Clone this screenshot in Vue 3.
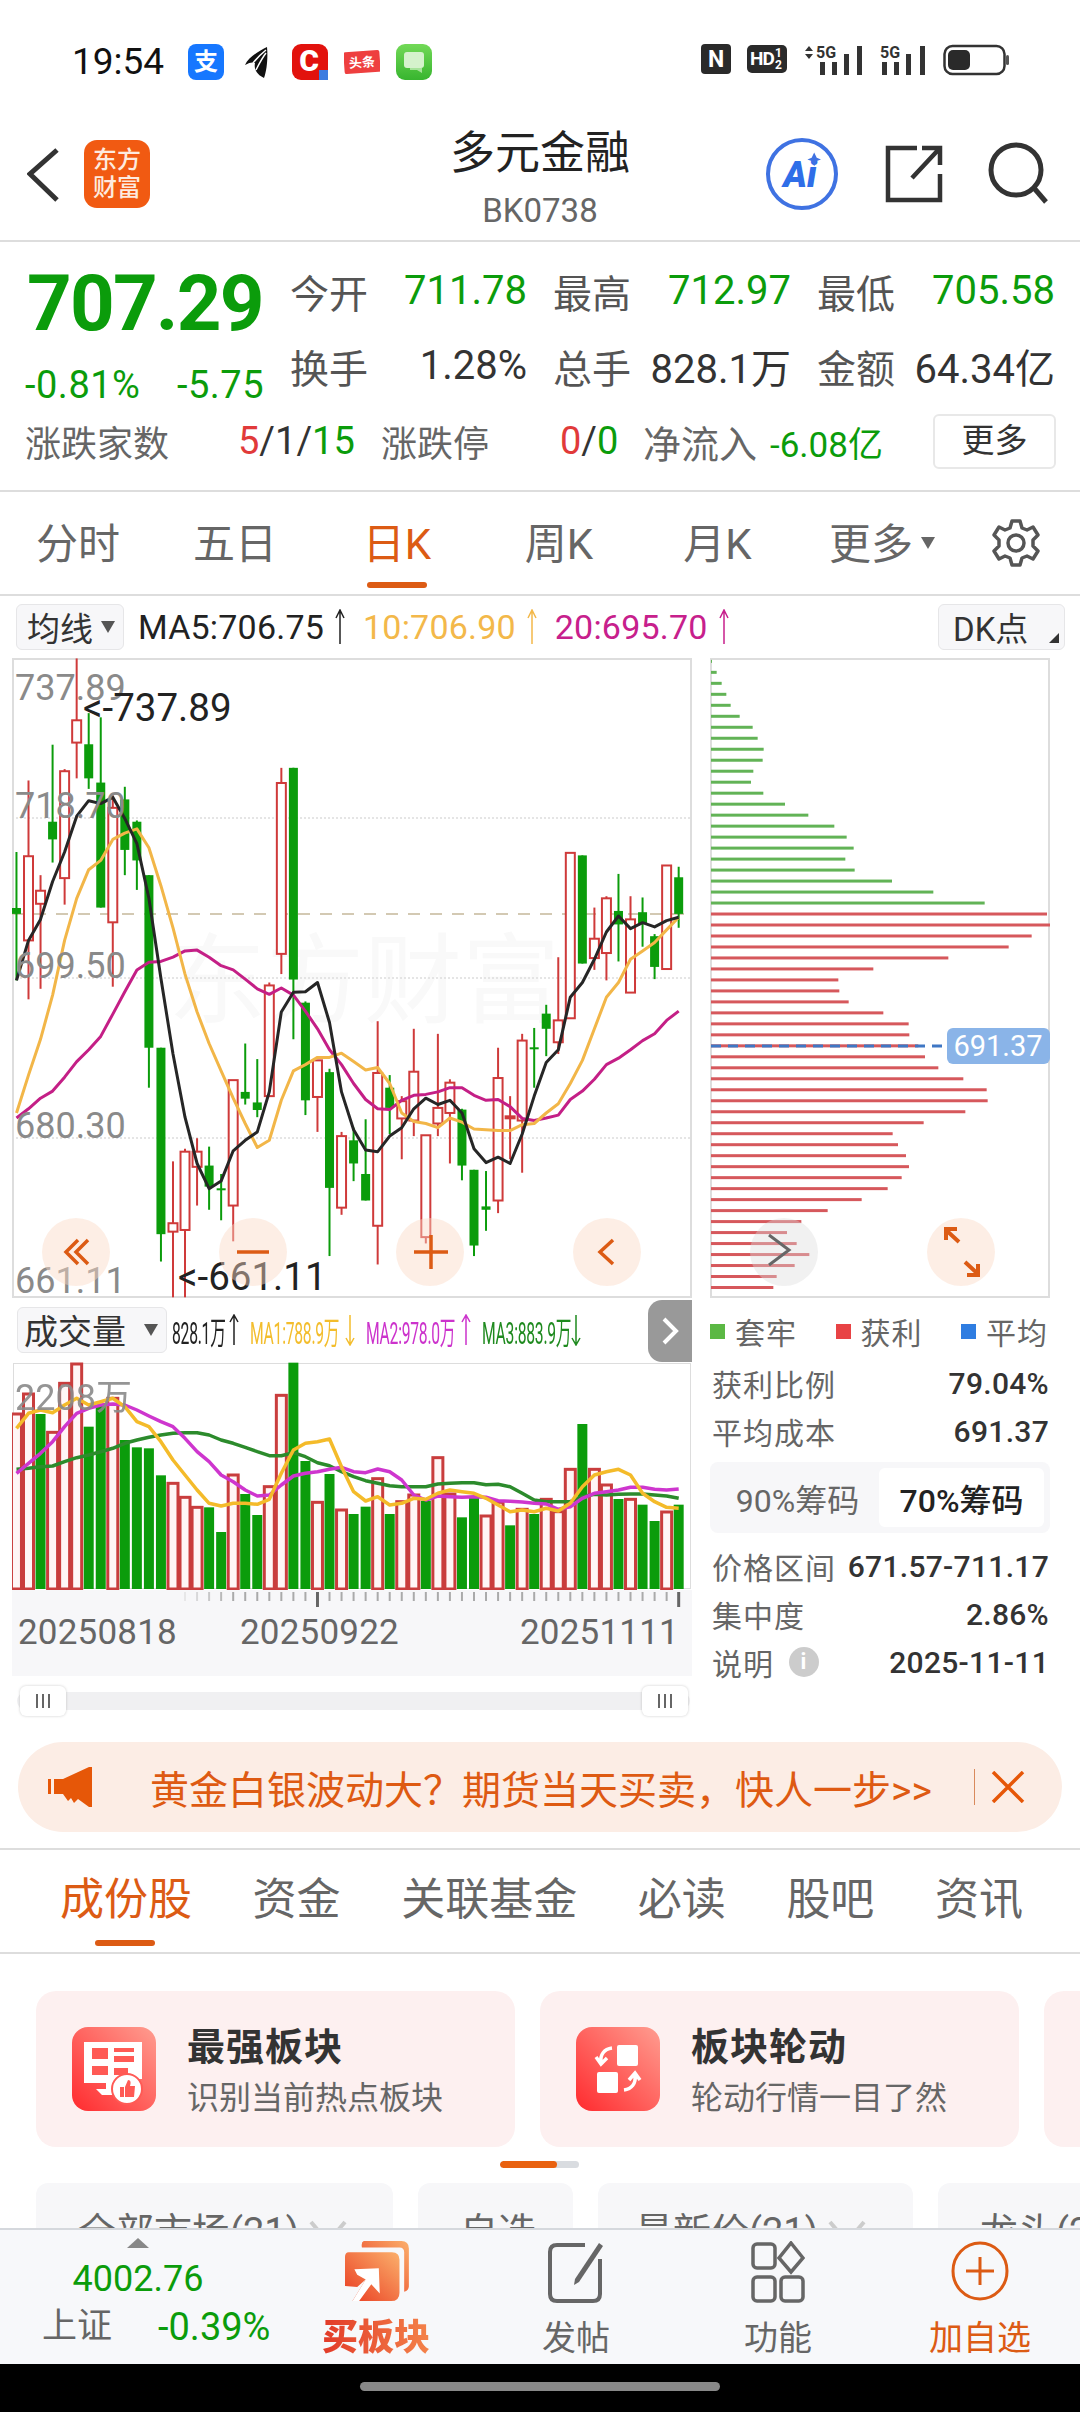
<template>
  <div class="page">
    <!-- status bar -->
    <div class="status">
      <div class="status-left">
        <span class="time">19:54</span>
        <svg class="st-ico" viewBox="0 0 36 36"><rect width="36" height="36" rx="8" fill="#1677ff"/><text x="18" y="26" text-anchor="middle" class="st-zhi">支</text></svg>
        <svg class="st-ico" viewBox="0 0 36 36"><path d="M27 3C17 8 8 14 5 21c5-3 8-3 10-2-1 4 0 11 9 15 3-8 4-21 3-31z" fill="#111"/><path d="M13 19C17 14 21 10 26 6M16 26C19 20 22 14 26 9" stroke="#fff" stroke-width="1.5" fill="none"/></svg>
        <svg class="st-ico" viewBox="0 0 36 36"><rect width="36" height="36" rx="9" fill="#e2120d"/><text x="17" y="27" text-anchor="middle" class="st-c">C</text><rect x="27" y="26" width="9" height="10" fill="#3d7ce0"/></svg>
        <svg class="st-ico" viewBox="0 0 36 36"><g transform="rotate(-4 18 18)"><rect y="7" width="36" height="22" rx="2" fill="#ee3f3f"/><text x="18" y="23" text-anchor="middle" class="st-tt">头条</text></g></svg>
        <svg class="st-ico" viewBox="0 0 36 36"><defs><linearGradient id="wx" x1="0" y1="0" x2="0" y2="1"><stop offset="0" stop-color="#72d957"/><stop offset="1" stop-color="#38b52f"/></linearGradient></defs><rect width="36" height="36" rx="9" fill="url(#wx)"/><rect x="8" y="8" width="20" height="16" rx="3" fill="#d5f2cc"/><path d="M14 24h12v5l-5-3h-7z" fill="#a6e39a"/></svg>
      </div>
      <div class="status-right">
        <svg width="30" height="30" viewBox="0 0 30 30"><rect width="30" height="30" rx="4" fill="#2a2a2a"/><text x="15" y="23" text-anchor="middle" class="st-n">N</text></svg>
        <svg width="40" height="30" viewBox="0 0 40 30"><rect width="40" height="28" y="1" rx="5" fill="#2a2a2a"/><text x="3" y="21" class="st-hd">HD</text><text x="28" y="13" class="st-sm">1</text><text x="28" y="25" class="st-sm">2</text></svg>
        <svg width="60" height="32" viewBox="0 0 60 32">
          <path d="M2 7l4-5 4 5zM2 10l4 5 4-5z" fill="#333"/>
          <text x="13" y="14" class="st-5g">5G</text>
          <path d="M17 18h5v13h-5zM29 18h5v13h-5zM41 10h5v21h-5zM54 2h5v29h-5z" fill="#333"/>
        </svg>
        <svg width="48" height="32" viewBox="0 0 48 32">
          <text x="1" y="14" class="st-5g">5G</text>
          <path d="M3 18h5v13H3zM15 18h5v13h-5zM27 10h5v21h-5zM41 2h5v29h-5z" fill="#333"/>
        </svg>
        <svg width="67" height="32" viewBox="0 0 67 32"><rect x="1.5" y="2" width="60" height="28" rx="8" fill="none" stroke="#333" stroke-width="2.5"/><rect x="5" y="6" width="22" height="20" rx="5" fill="#2a2a2a"/><rect x="63" y="11" width="3" height="10" rx="1.5" fill="#555"/></svg>
      </div>
    </div>

    <!-- nav -->
    <div class="nav">
      <div class="nav-left">
        <svg class="back" width="32" height="56" viewBox="0 0 32 56"><path d="M30 3L3 27l27 26" fill="none" stroke="#333" stroke-width="5"/></svg>
        <div class="logo">东方<br>财富</div>
      </div>
      <div class="nav-title">
        <div class="title">多元金融</div>
        <div class="code">BK0738</div>
      </div>
      <div class="nav-right">
        <svg width="74" height="74" viewBox="0 0 74 74"><circle cx="37" cy="37" r="34" fill="none" stroke="#3f72e2" stroke-width="4"/><text x="35" y="50" text-anchor="middle" class="ai">Ai</text><path d="M52 16l3 6 5 2-5 2-3 6-3-6-5-2 5-2z" fill="#3f72e2" transform="translate(5 2) scale(.85)"/></svg>
        <svg width="60" height="60" viewBox="0 0 60 60"><path d="M33 4H4v52h52V30M28 34L56 4M38 4h18v17" fill="none" stroke="#333" stroke-width="4.5"/></svg>
        <svg width="62" height="62" viewBox="0 0 62 62"><circle cx="28" cy="28" r="25" fill="none" stroke="#333" stroke-width="5"/><path d="M46 46l12 14" stroke="#333" stroke-width="5"/></svg>
      </div>
    </div>

    <!-- quote -->
    <div class="quote">
      <div class="quote-top">
        <div class="price-col">
          <div class="price">707.29</div>
          <div class="price-sub"><span>-0.81%</span><span>-5.75</span></div>
        </div>
        <div class="stats">
          <div v-for="s in stats" :key="s.k" class="stat">
            <span class="stat-k">{{ s.k }}</span>
            <span class="stat-v" :class="{ green: s.g }">{{ s.v }}</span>
          </div>
        </div>
      </div>
      <div class="breadth">
        <span class="b-k b1">涨跌家数</span>
        <span class="b-v b2"><i class="red">5</i>/1/<i class="green">15</i></span>
        <span class="b-k b3">涨跌停</span>
        <span class="b-v b4"><i class="red">0</i>/<i class="green">0</i></span>
        <span class="b-k b5">净流入</span>
        <span class="b-v b6 green">-6.08亿</span>
        <span class="more-btn">更多</span>
      </div>
    </div>

    <!-- period tabs -->
    <div class="periods">
      <span v-for="p in periods" :key="p" class="period" :class="{ on: p === '日K' }"><em>{{ p }}</em></span>
      <span class="period"><em>更多</em><i class="tri"></i></span>
      <svg class="gear" width="50" height="50" viewBox="0 0 50 48"><path d="M21 2h8l2 7 5 2 6-3 5 8-5 5v6l5 5-5 8-6-3-5 2-2 7h-8l-2-7-5-2-6 3-5-8 5-5v-6l-5-5 5-8 6 3 5-2z" fill="none" stroke="#555" stroke-width="3.5" stroke-linejoin="round"/><circle cx="25" cy="24" r="8" fill="none" stroke="#555" stroke-width="3.5"/></svg>
    </div>

    <!-- MA legend -->
    <div class="ma-row">
      <span class="select">均线<i class="tri dark"></i></span>
      <span v-for="m in maLegend" :key="m.t" class="ma-item" :style="{ color: m.c }">{{ m.t }}<svg class="arrow" width="12" height="36" viewBox="0 0 12 36"><path d="M6 35V1M2 9l4-8 4 8" fill="none" stroke="currentColor" stroke-width="1.5"/></svg></span>
      <span class="select dk">DK点<i class="corner"></i></span>
    </div>

    <!-- main + chip chart -->
    <div class="chart-row">
      <div class="chart main-chart">
        <div class="watermark">东方财富</div>
        <svg class="chart-svg" width="680" height="640" viewBox="0 0 680 640">
          <line v-for="y in gridY" :key="y" x1="0" x2="680" :y1="y" :y2="y" class="grid"/>
          <line x1="0" x2="680" y1="256" y2="256" class="last"/>
          <g v-for="(c, i) in candles" :key="i" :class="c.up ? 'up' : 'dn'">
            <line :x1="c.x" :x2="c.x" :y1="c.wt" :y2="c.wb" class="wick"/>
            <rect :x="c.x - 4.5" :width="9" :y="c.bt" :height="c.h" class="body"/>
          </g>
          <polyline :points="ma20" class="ln m20"/>
          <polyline :points="ma10" class="ln m10"/>
          <polyline :points="ma5" class="ln m5"/>
          <text v-for="l in axisLabels" :key="l.t" x="3" :y="l.y" class="ax">{{ l.t }}</text>
          <text x="71" y="63" class="mark">&lt;-737.89</text>
          <text x="166" y="632" class="mark">&lt;-661.11</text>
          <g v-for="b in zoomBtns" :key="b.x"><circle :cx="b.x" cy="594" r="34" class="zbtn"/></g>
          <path d="M66 582l-12 12 12 12M76 582l-12 12 12 12" class="zic"/>
          <path d="M225 594h32" class="zic"/>
          <path d="M402 594h34M419 577v34" class="zic"/>
          <path d="M601 582l-13 12 13 12" class="zic"/>
        </svg>
      </div>
      <div class="chart chip-chart">
        <svg class="chart-svg" width="340" height="640" viewBox="0 0 340 640">
          <rect v-for="(b, i) in chips" :key="i" x="1" :y="b.y" :width="b.w" height="3" :fill="b.c"/>
          <line x1="1" x2="236" y1="388" y2="388" class="avg"/>
          <rect x="237" y="370" width="103" height="36" rx="6" fill="#8ab4e8"/>
          <text x="288" y="398" text-anchor="middle" class="avg-t">691.37</text>
          <circle cx="74" cy="594" r="34" fill="#dcdcdc" opacity=".4"/>
          <path d="M59 577l20 15-20 15" fill="none" stroke="#666" stroke-width="3"/>
          <circle cx="251" cy="594" r="34" class="zbtn"/>
          <path d="M236 582v-11h11M236 572l13 12M268 606v11h-11M268 616l-13-12" fill="none" stroke="#dc5b14" stroke-width="4"/>
        </svg>
      </div>
    </div>

    <div class="lower-row">
      <div class="lower-left">
        <div class="vol-head">
          <span class="select vol-sel">成交量<i class="tri dark"></i></span>
          <div v-for="v in volLegend" :key="v.t" class="vl" :style="{ color: v.c, width: v.w + 'px' }">
            <span class="vl-t">{{ v.t }}</span>
            <svg class="vl-a" :class="{ down: v.down }" width="12" height="32" viewBox="0 0 12 32"><path d="M6 31V1M2 8l4-7 4 7" fill="none" stroke="currentColor" stroke-width="1.5"/></svg>
          </div>
          <div class="side-tab"><svg width="18" height="30" viewBox="0 0 18 30"><path d="M3 3l12 12L3 27" fill="none" stroke="#fff" stroke-width="4"/></svg></div>
        </div>
        <div class="chart vol-chart">
          <svg class="chart-svg" width="680" height="228" viewBox="0 0 680 228">
            <rect v-for="(b, i) in volBars" :key="i" :x="b.x" :y="b.y" width="10" :height="b.h" :class="b.up ? 'vup' : 'vdn'"/>
            <polyline :points="vMa3" class="vln v3"/>
            <polyline :points="vMa2" class="vln v2"/>
            <polyline :points="vMa1" class="vln v1"/>
            <text x="3" y="48" class="ax vol-ax">2208万</text>
          </svg>
        </div>
        <div class="axis">
          <svg class="ticks" width="680" height="20" viewBox="0 0 680 20">
            <line v-for="t in ticks" :key="t.x" :x1="t.x" :x2="t.x" y1="2" :y2="t.major ? 17 : 11" :stroke="t.major ? '#666' : '#aaa'" :stroke-width="t.major ? 3 : 2" :opacity="t.o"/>
          </svg>
          <div class="dates"><span>20250818</span><span>20250922</span><span>20251111</span></div>
        </div>
        <div class="slider">
          <div class="track"></div>
          <span class="handle"><i></i><i></i><i></i></span>
          <span class="handle"><i></i><i></i><i></i></span>
        </div>
      </div>
      <div class="info">
        <div class="legend">
          <span><i style="background:#5bb844"></i>套牢</span>
          <span><i style="background:#e84345"></i>获利</span>
          <span><i style="background:#2f7de1"></i>平均</span>
        </div>
        <div class="info-row"><span>获利比例</span><b>79.04%</b></div>
        <div class="info-row"><span>平均成本</span><b>691.37</b></div>
        <div class="toggle"><span>90%筹码</span><span class="on">70%筹码</span></div>
        <div class="info-row"><span>价格区间</span><b>671.57-711.17</b></div>
        <div class="info-row"><span>集中度</span><b>2.86%</b></div>
        <div class="info-row"><span class="note">说明<i class="info-i">i</i></span><b>2025-11-11</b></div>
      </div>
    </div>

    <!-- banner -->
    <div class="banner">
      <svg class="horn" width="46" height="40" viewBox="0 0 46 40"><path d="M44 0v40h-3L30 32l-4 4-3-5-3 3-5-7H6V12h9L41 0z" fill="#e65708"/><rect y="12" width="3" height="15" fill="#e65708"/></svg>
      <span class="banner-t">黄金白银波动大？期货当天买卖，快人一步&gt;&gt;</span>
      <i class="banner-sep"></i>
      <svg width="34" height="32" viewBox="0 0 34 32"><path d="M2 1l30 30M32 1L2 31" stroke="#e65708" stroke-width="3.5"/></svg>
    </div>

    <!-- content tabs -->
    <div class="ctabs">
      <span v-for="t in contentTabs" :key="t" class="ctab" :class="{ on: t === '成份股' }">{{ t }}</span>
    </div>

    <div class="scroll">
      <div class="cards">
        <div class="card">
          <svg class="card-ico" width="84" height="84" viewBox="0 0 84 84">
            <defs><linearGradient id="cg" x1="1" y1="0" x2="0" y2="1"><stop offset="0" stop-color="#ff9d90"/><stop offset="1" stop-color="#ff2a2e"/></linearGradient></defs>
            <rect width="84" height="84" rx="16" fill="url(#cg)"/>
            <path d="M12 15h58v37H58v16H30l-6-6h10v-6H12z" fill="#fff"/>
            <path d="M20 21h16v11H20zM42 21h20v4H42zM42 29h20v6H42zM20 39h16v9H20zM42 41h14v7H42z" fill="#ff5a55"/>
            <circle cx="55" cy="62" r="15" fill="#fff" stroke="#ff5a55" stroke-width="2"/>
            <path d="M48 60h4v10h-4zM53 60l3-7c3 0 3 3 2 6h5l-1 11h-9z" fill="#ff5a55"/>
          </svg>
          <div><div class="card-t">最强板块</div><div class="card-s">识别当前热点板块</div></div>
        </div>
        <div class="card">
          <svg class="card-ico" width="84" height="84" viewBox="0 0 84 84">
            <defs><linearGradient id="cg2" x1="1" y1="0" x2="0" y2="1"><stop offset="0" stop-color="#ff9d90"/><stop offset="1" stop-color="#ff2a2e"/></linearGradient></defs>
            <rect width="84" height="84" rx="16" fill="url(#cg2)"/>
            <rect x="41" y="18" width="21" height="21" rx="2" fill="#fff"/>
            <rect x="21" y="45" width="21" height="21" rx="2" fill="#fff"/>
            <path d="M36 21c-8 1-12 7-11 14M20 30l5 7 6-6M48 63c8-1 12-7 11-14M53 53l6-7 5 7" fill="none" stroke="#fff" stroke-width="3.5"/>
          </svg>
          <div><div class="card-t">板块轮动</div><div class="card-s">轮动行情一目了然</div></div>
        </div>
        <div class="card"></div>
      </div>
      <div class="indicator"><i></i></div>
      <div class="chips">
        <span class="chip c1">全部市场(21)<svg class="chev" width="38" height="24" viewBox="0 0 38 24"><path d="M2 2l17 20L36 2" fill="none" stroke="#ccc" stroke-width="4"/></svg></span>
        <span class="chip c2">自选</span>
        <span class="chip c3">最新价(21)<svg class="chev" width="38" height="24" viewBox="0 0 38 24"><path d="M2 2l17 20L36 2" fill="none" stroke="#ccc" stroke-width="4"/></svg></span>
        <span class="chip c4">龙头(21)</span>
      </div>
    </div>

    <!-- bottom bar -->
    <div class="bottom">
      <div class="index">
        <i class="index-tri"></i>
        <div class="index-v">4002.76</div>
        <div class="index-r"><span>上证</span><b>-0.39%</b></div>
      </div>
      <div class="tool">
        <svg width="70" height="66" viewBox="0 0 70 66">
          <defs><linearGradient id="bb" x1="1" y1="0" x2="0" y2="1"><stop offset="0" stop-color="#fbb06c"/><stop offset="1" stop-color="#e93a20"/></linearGradient></defs>
          <path d="M22 0h40q8 0 8 8v40q0 5-5 6V12q0-5-5-5H20q-1-6 2-7z" fill="url(#bb)"/>
          <path d="M6 12h46q8 0 8 8v35q0 9-9 9H10l14-23-9 8-13-1V17q0-5 4-5z" fill="url(#bb)"/>
          <path d="M12 30l26-1 1 27-9-10-13 18H10l14-23-9-5z" fill="#fff"/>
        </svg>
        <span class="tool-t buy">买板块</span>
      </div>
      <div class="tool">
        <svg width="58" height="62" viewBox="0 0 58 62"><path d="M38 4H10q-7 0-7 7v42q0 7 7 7h36q7 0 7-7V18" fill="none" stroke="#666" stroke-width="4"/><path d="M52 2l4 3-24 36-5 3 1-6z" fill="#666"/></svg>
        <span class="tool-t">发帖</span>
      </div>
      <div class="tool">
        <svg width="54" height="62" viewBox="0 0 54 62" fill="none" stroke="#666" stroke-width="3.5"><rect x="2" y="3" width="22" height="24" rx="4"/><path d="M40 2l12 15-12 14-12-14z"/><rect x="2" y="36" width="22" height="24" rx="4"/><rect x="30" y="36" width="22" height="24" rx="4"/></svg>
        <span class="tool-t">功能</span>
      </div>
      <div class="tool">
        <svg width="58" height="62" viewBox="0 0 58 62" fill="none" stroke="#dc5b14" stroke-width="3"><ellipse cx="29" cy="30" rx="27" ry="28"/><path d="M15 30h28M29 16v28"/></svg>
        <span class="tool-t add">加自选</span>
      </div>
    </div>
    <div class="gesture"><i></i></div>
  </div>
</template>

<script setup>
const stats = [
  { k: '今开', v: '711.78', g: true },
  { k: '最高', v: '712.97', g: true },
  { k: '最低', v: '705.58', g: true },
  { k: '换手', v: '1.28%' },
  { k: '总手', v: '828.1万' },
  { k: '金额', v: '64.34亿' },
];
const periods = ['分时', '五日', '日K', '周K', '月K'];
const contentTabs = ['成份股', '资金', '关联基金', '必读', '股吧', '资讯'];
const maLegend = [
  { t: 'MA5:706.75', c: '#222' },
  { t: '10:706.90', c: '#f3b84a' },
  { t: '20:695.70', c: '#c7208c' },
];
const volLegend = [
  { t: '828.1万', c: '#222', w: 78 },
  { t: 'MA1:788.9万', c: '#f3bd2c', w: 116, down: true },
  { t: 'MA2:978.0万', c: '#cc33cc', w: 116 },
  { t: 'MA3:883.9万', c: '#1f8a1f', w: 110, down: true },
];

// 坐标都是从截图上量的
const fx = (i) => (38 + i * 26.97) / 2.24 - 12.5;
const my = (v) => v / 2.376 - 8;
const vy = (v) => v / 3 - 72;

// [涨?, 上影, 实体顶, 实体底, 下影]
const rawCandles = [
  [0, 480, 613, 627, 785], [1, 310, 490, 690, 830], [1, 535, 572, 603, 805], [0, 225, 408, 450, 505],
  [1, 283, 288, 542, 605], [1, 20, 167, 220, 305], [0, 150, 224, 305, 330], [0, 160, 315, 612, 612],
  [1, 345, 375, 647, 800], [0, 325, 355, 475, 535], [0, 405, 408, 500, 570], [0, 535, 535, 945, 1040],
  [0, 945, 945, 1388, 1453], [1, 1215, 1362, 1382, 1538], [1, 1185, 1192, 1378, 1538], [1, 1160, 1192, 1228, 1320],
  [0, 1180, 1225, 1275, 1330], [0, 1245, 1279, 1281, 1355], [1, 1022, 1022, 1320, 1405], [0, 935, 1050, 1066, 1080],
  [0, 972, 1075, 1093, 1110], [1, 790, 797, 1060, 1060], [1, 280, 316, 722, 770], [0, 280, 280, 783, 925],
  [0, 835, 838, 1070, 1105], [1, 975, 975, 1062, 1145], [0, 995, 1003, 1278, 1440], [1, 1145, 1155, 1325, 1342],
  [0, 1135, 1165, 1220, 1262], [0, 1115, 1245, 1308, 1308], [1, 882, 1005, 1368, 1460], [0, 1010, 1040, 1088, 1150],
  [1, 1060, 1072, 1113, 1210], [1, 900, 1002, 1118, 1155], [1, 1153, 1153, 1395, 1410], [1, 912, 1088, 1125, 1155],
  [1, 1020, 1028, 1100, 1220], [0, 1090, 1092, 1225, 1260], [0, 1235, 1235, 1415, 1440], [0, 1238, 1322, 1330, 1380],
  [1, 945, 1017, 1308, 1338], [1, 1060, 1108, 1110, 1210], [1, 912, 928, 1118, 1242], [0, 898, 944, 946, 1040],
  [0, 843, 864, 900, 965], [1, 730, 880, 932, 960], [1, 480, 482, 875, 875], [0, 488, 488, 745, 745],
  [1, 612, 686, 732, 760], [1, 585, 590, 720, 785], [0, 532, 620, 652, 740], [1, 585, 640, 814, 814],
  [0, 588, 623, 650, 705], [0, 675, 680, 753, 782], [1, 512, 512, 758, 758], [0, 515, 540, 627, 660],
];
const candles = rawCandles.map(([up, wt, bt, bb, wb], i) => ({
  up: !!up,
  x: fx(i),
  wt: my(wt),
  wb: my(wb),
  bt: my(bt),
  h: Math.max(my(bb) - my(bt), 2),
}));

const line = (ys, yFn) => ys.map((v, i) => `${fx(i).toFixed(1)},${yFn(v).toFixed(1)}`).join(' ');

const ma5 = line([785, 690, 640, 550, 480, 395, 358, 365, 350, 400, 460, 590, 780, 960, 1110, 1220, 1280, 1262, 1190, 1165, 1145, 1050, 860, 813, 812, 790, 885, 1050, 1140, 1188, 1192, 1155, 1135, 1090, 1065, 1080, 1070, 1100, 1185, 1218, 1205, 1220, 1150, 1060, 980, 950, 825, 790, 735, 670, 632, 662, 648, 658, 643, 635], my);
const ma10 = line([1100, 1010, 925, 820, 690, 590, 522, 500, 450, 435, 425, 470, 560, 660, 770, 860, 935, 1000, 1065, 1125, 1182, 1165, 1070, 1000, 985, 968, 968, 958, 978, 998, 992, 1030, 1100, 1120, 1125, 1135, 1112, 1122, 1138, 1140, 1142, 1142, 1128, 1125, 1100, 1078, 1030, 975, 900, 825, 790, 735, 715, 695, 665, 635], my);
const ma20 = line([1112, 1090, 1065, 1048, 1015, 978, 950, 918, 865, 812, 760, 742, 740, 730, 715, 713, 730, 750, 760, 782, 805, 818, 803, 820, 858, 900, 950, 985, 1030, 1068, 1090, 1092, 1070, 1058, 1056, 1050, 1040, 1040, 1058, 1070, 1068, 1085, 1113, 1118, 1112, 1105, 1068, 1048, 1020, 985, 970, 950, 928, 912, 880, 858], my);

const gridY = [160, 320, 480];
const axisLabels = [
  { t: '737.89', y: 42 },
  { t: '718.70', y: 160 },
  { t: '699.50', y: 320 },
  { t: '680.30', y: 480 },
  { t: '661.11', y: 635 },
];
const zoomBtns = [{ x: 64 }, { x: 241 }, { x: 418 }, { x: 595 }];

const chipEnds = [66, 80, 95, 109, 122, 149, 188, 203, 221, 218, 190, 183, 220, 285, 355, 433, 470, 491, 466, 494, 606, 730, 884,
  1071, 1080, 1025, 956, 775, 550, 445, 448, 476, 580, 656, 658, 685, 705, 745, 820, 890, 893, 826, 701, 608, 624, 648, 657, 635, 593, 515, 413, 334, 291, 320, 358, 314, 260, 250];
const chips = chipEnds.map((e, i) => ({
  y: (27 + i * 26.1) / 2.376 - 8 - 1.5,
  w: (e - 63) / 3,
  c: i < 23 ? '#62b356' : '#d6585c',
}));

const volUp = [1, 1, 0, 1, 1, 1, 0, 0, 1, 0, 0, 0, 0, 1, 1, 1, 0, 0, 1, 0, 0, 1, 1, 0, 0, 1, 0, 1, 0, 0, 1, 0, 1, 1, 0, 1, 1, 0, 0, 1, 1, 0, 1, 0, 1, 1, 1, 0, 1, 1, 0, 1, 0, 0, 1, 0];
const volTop = [372, 312, 372, 427, 280, 222, 410, 345, 325, 450, 472, 475, 556, 580, 622, 652, 652, 726, 555, 612, 675, 590, 316, 218, 513, 637, 552, 660, 672, 650, 566, 672, 635, 615, 632, 503, 612, 682, 622, 678, 637, 706, 658, 672, 628, 665, 538, 402, 538, 585, 627, 628, 644, 693, 666, 644];
const volBars = volTop.map((t, i) => ({
  up: !!volUp[i],
  x: fx(i) - 5,
  y: vy(t),
  h: 227 - vy(t),
}));

const vMa1 = line([415, 370, 360, 368, 345, 325, 345, 335, 325, 350, 395, 410, 455, 510, 555, 600, 640, 648, 640, 640, 643, 628, 550, 480, 460, 455, 447, 530, 605, 633, 620, 645, 640, 625, 628, 610, 600, 605, 610, 625, 645, 665, 660, 665, 655, 663, 640, 590, 555, 545, 538, 555, 610, 635, 652, 655], vy);
const vMa2 = line([550, 520, 490, 455, 410, 370, 355, 345, 342, 345, 360, 378, 395, 410, 445, 485, 515, 555, 575, 600, 618, 615, 585, 558, 550, 545, 538, 532, 545, 548, 537, 545, 570, 615, 630, 618, 620, 622, 620, 622, 632, 634, 636, 640, 642, 658, 650, 625, 610, 605, 600, 592, 592, 598, 600, 597], vy);
const vMa3 = line([538, 535, 530, 528, 515, 503, 495, 485, 475, 460, 450, 442, 435, 430, 428, 428, 435, 450, 460, 472, 485, 497, 497, 488, 500, 518, 527, 545, 560, 572, 580, 587, 590, 590, 590, 582, 580, 578, 578, 584, 583, 590, 610, 630, 635, 635, 635, 620, 613, 615, 613, 612, 612, 615, 618, 625], vy);

const ticks = volTop.map((_, i) => ({
  x: fx(i),
  major: i === 25 || i === 55,
  o: i < 14 ? 0 : i < 18 ? (i - 13) / 5 : 1,
})).filter((t) => t.o > 0);
</script>

<style scoped>
.page {
  width: 1080px;
  height: 2412px;
  display: flex;
  flex-direction: column;
  overflow: hidden;
  background: #fff;
  font-family: Roboto, "Noto Sans CJK SC", sans-serif;
  color: #333;
}
i, em { font-style: normal; }
.green { color: #0b9c0b; }
.red { color: #e13a3a; }

.status {
  height: 100px;
  flex-shrink: 0;
  padding: 44px 70px 0 72px;
  box-sizing: border-box;
  display: flex;
  justify-content: space-between;
}
.status-left { display: flex; align-items: flex-start; gap: 16px; }
.time { width: 100px; font-size: 37px; line-height: 36px; color: #111; }
.st-ico { width: 36px; height: 36px; }
.st-zhi { font-size: 24px; font-weight: 700; fill: #fff; }
.st-c { font-size: 30px; font-weight: 900; fill: #fff; }
.st-tt { font-size: 13px; font-weight: 700; fill: #fff; }
.status-right { display: flex; align-items: flex-start; gap: 16px; }
.st-n { font-size: 23px; font-weight: 700; fill: #fff; }
.st-hd { font-size: 19px; font-weight: 700; fill: #fff; letter-spacing: -1px; }
.st-sm { font-size: 12px; font-weight: 700; fill: #fff; }
.st-5g { font-size: 16px; font-weight: 700; fill: #333; }
.ai { font-size: 36px; font-weight: 900; font-style: italic; fill: #2f6ee8; }

.nav {
  height: 142px;
  flex-shrink: 0;
  box-sizing: border-box;
  border-bottom: 2px solid #ddd;
  display: grid;
  grid-template-columns: 1fr auto 1fr;
}
.nav-left { display: flex; align-items: flex-start; }
.back { margin: 47px 0 0 27px; }
.logo {
  margin: 40px 0 0 25px;
  width: 66px;
  height: 68px;
  box-sizing: border-box;
  padding-top: 6px;
  border-radius: 13px;
  background: #f15a12;
  color: #fdeadf;
  font-size: 24px;
  line-height: 28px;
  font-weight: 500;
  text-align: center;
}
.nav-title { text-align: center; }
.title { margin-top: 26px; font-size: 45px; line-height: 56px; color: #222; }
.code { margin-top: 10px; font-size: 33px; line-height: 38px; color: #666; }
.nav-right { display: flex; justify-content: flex-end; align-items: flex-start; padding: 37px 30px 0 0; }
.nav-right svg:nth-child(2) { margin: 7px 0 0 45px; }
.nav-right svg:nth-child(3) { margin: 5px 0 0 44px; }

.quote {
  height: 250px;
  flex-shrink: 0;
  box-sizing: border-box;
  border-bottom: 2px solid #ddd;
  padding: 16px 25px 0;
  position: relative;
}
.quote-top { display: flex; }
.price-col { width: 265px; }
.price { font-size: 78px; line-height: 92px; font-weight: 700; color: #0b9c0b; letter-spacing: -1.8px; margin-left: 2px; }
.price-sub {
  margin-top: 13px;
  display: flex;
  justify-content: space-between;
  padding-right: 26px;
  font-size: 38px;
  line-height: 44px;
  letter-spacing: .5px;
  color: #0b9c0b;
  white-space: nowrap;
}
.stats {
  display: grid;
  grid-template-columns: 237px 238px 238px;
  grid-auto-rows: 75px;
  column-gap: 26px;
  margin-top: -5px;
}
.stat { display: flex; justify-content: space-between; align-items: center; }
.stat-k { font-size: 39px; color: #555; }
.stat-v { font-size: 40px; color: #333; white-space: nowrap; }
.stat-v.green { color: #0b9c0b; }
.breadth {
  display: grid;
  grid-template-columns: 213px 143px 180px 84px 125px 163px auto;
  align-items: center;
  height: 56px;
  margin-top: 6px;
}
.b-k { font-size: 36px; color: #666; white-space: nowrap; }
.b-v { font-size: 38px; color: #333; white-space: nowrap; }
.b6 { color: #0b9c0b; font-size: 35px; }
.b5 { font-size: 38px; margin-left: -2px; }
.b4 { margin-left: -1px; }
.b2, .b3, .b4, .b5, .b6 { justify-self: start; }
.more-btn {
  width: 123px;
  height: 55px;
  box-sizing: border-box;
  border: 2px solid #e8e8e8;
  border-radius: 6px;
  text-align: center;
  font-size: 33px;
  line-height: 50px;
  color: #333;
}

.periods {
  height: 104px;
  flex-shrink: 0;
  box-sizing: border-box;
  border-bottom: 2px solid #ddd;
  display: grid;
  grid-template-columns: 156px 158px 166px 158px 159px 170px 1fr;
  align-items: center;
  position: relative;
}
.period {
  position: relative;
  height: 100%;
  display: flex;
  align-items: center;
  justify-content: center;
  font-size: 42px;
  color: #666;
}
.period em { margin-top: -6px; }
.period.on { color: #dc5b14; }
.period.on::after {
  content: "";
  position: absolute;
  left: 50%;
  bottom: 6px;
  width: 60px;
  height: 6px;
  margin-left: -30px;
  border-radius: 3px;
  background: #dc5b14;
}
.tri {
  display: inline-block;
  margin-left: 8px;
  border-left: 7px solid transparent;
  border-right: 7px solid transparent;
  border-top: 12px solid #666;
}
.tri.dark { border-top-color: #555; }
.gear { margin-left: 24px; }

.ma-row {
  height: 62px;
  flex-shrink: 0;
  display: flex;
  align-items: center;
  padding: 0 15px 0 16px;
  box-sizing: border-box;
}
.select {
  height: 46px;
  box-sizing: border-box;
  display: inline-flex;
  align-items: center;
  padding: 0 8px 0 10px;
  background: #f7f7f9;
  border: 1px solid #e6e6e8;
  border-radius: 6px;
  font-size: 33px;
  color: #333;
  position: relative;
}
.ma-item {
  display: inline-flex;
  align-items: center;
  font-size: 34px;
  letter-spacing: .2px;
  margin-left: 14px;
}
.ma-item .arrow { margin-left: 10px; }
.ma-row .ma-item:nth-child(3) { margin-left: 17px; }
.ma-row .ma-item:nth-child(4) { margin-left: 17px; }
.dk { margin-left: auto; width: 127px; padding-left: 14px; }
.corner {
  position: absolute;
  right: 5px;
  bottom: 6px;
  border-left: 10px solid transparent;
  border-bottom: 10px solid #333;
}

.chart-row {
  display: grid;
  grid-template-columns: 680px 340px;
  column-gap: 18px;
  margin-left: 12px;
  flex-shrink: 0;
}
.chart {
  position: relative;
  outline: 2px solid #ddd;
  outline-offset: -2px;
  overflow: hidden;
}
.main-chart { height: 640px; }
.chip-chart { height: 640px; }
.chart-svg { display: block; position: relative; }
.watermark {
  position: absolute;
  left: 156px;
  top: 269px;
  font-size: 98px;
  line-height: 110px;
  color: #f9f9f9;
  white-space: nowrap;
}
.grid { stroke: #ddd; stroke-width: 1.5; stroke-dasharray: 2 2; }
.last { stroke: #d3c9b3; stroke-width: 2; stroke-dasharray: 12 10; }
.wick { stroke-width: 2; }
.up .wick { stroke: #cf3a3a; }
.dn .wick { stroke: #0b9c0b; }
.up .body { fill: #fff; stroke: #cf3a3a; stroke-width: 2; }
.dn .body { fill: #0b9c0b; }
.ln { fill: none; stroke-width: 3; stroke-linejoin: round; }
.m5 { stroke: #262626; }
.m10 { stroke: #f2b648; }
.m20 { stroke: #c41f86; }
.ax { font-size: 36px; fill: #8a8a8a; }
.mark { font-size: 38.5px; fill: #222; }
.zbtn { fill: #fbd9c6; opacity: .45; }
.zic { fill: none; stroke: #dc5b14; stroke-width: 3.5; }
.avg { stroke: #3f77c4; stroke-width: 3; stroke-dasharray: 10 7; }
.avg-t { font-size: 29px; fill: #fff; }

.lower-row {
  display: grid;
  grid-template-columns: 680px 340px;
  column-gap: 18px;
  margin-left: 12px;
  height: 422px;
  flex-shrink: 0;
}
.vol-head { height: 64px; display: flex; align-items: center; padding-left: 5px; }
.vol-sel { width: 150px; height: 46px; font-size: 34px; padding-left: 6px; justify-content: space-between; margin-top: -1px; flex-shrink: 0; }
.vl { display: flex; align-items: center; height: 34px; position: relative; flex-shrink: 0; }
.vl-t { font-size: 32px; white-space: nowrap; transform: scaleX(.49); transform-origin: left center; position: absolute; left: 5px; letter-spacing: -.5px; }
.vl-a { position: absolute; right: 5px; }
.vl-a.down { transform: rotate(180deg); }
.side-tab {
  margin-left: auto;
  width: 44px;
  height: 62px;
  margin-top: 2px;
  background: #999;
  border-radius: 14px 0 0 14px;
  display: flex;
  align-items: center;
  justify-content: center;
}
.vol-chart { height: 228px; outline-width: 1.5px; }
.vup { fill: #fff6f6; stroke: #c93d3d; stroke-width: 3; }
.vdn { fill: #0b9c0b; }
.vln { fill: none; stroke-width: 3.5; stroke-linejoin: round; }
.v1 { stroke: #f4bb2a; }
.v2 { stroke: #ce36ce; }
.v3 { stroke: #2c8b2c; }
.vol-ax { opacity: .9; }
.axis { height: 86px; background: #f7f7f9; }
.ticks { display: block; }
.dates {
  display: grid;
  grid-template-columns: 222px 280px auto;
  padding: 2px 0 0 6px;
  font-size: 35px;
  line-height: 42px;
  color: #666;
  letter-spacing: .2px;
}
.slider { position: relative; height: 44px; display: flex; justify-content: space-between; padding: 10px 4px 0 8px; box-sizing: border-box; }
.track { position: absolute; left: 5px; right: 2px; top: 16px; height: 18px; background: #f0f0f2; border-radius: 9px; }
.handle {
  position: relative;
  width: 46px;
  height: 30px;
  background: #fff;
  border-radius: 6px;
  box-shadow: 0 0 3px rgba(0, 0, 0, .2);
  display: flex;
  justify-content: center;
  align-items: center;
  gap: 4px;
}
.handle i { width: 2px; height: 14px; background: #666; }

.info { font-size: 30px; color: #666; }
.legend { display: flex; justify-content: space-between; height: 56px; margin-top: 5px; align-items: center; padding-right: 2px; }
.legend span { display: flex; align-items: center; letter-spacing: 1px; }
.legend i { width: 15px; height: 15px; margin-right: 10px; }
.info-row { display: flex; justify-content: space-between; align-items: center; height: 48px; padding: 0 1px 0 2px; letter-spacing: 1px; }
.info-row b { font-weight: 500; color: #333; font-size: 30px; letter-spacing: .3px; }
.note { display: flex; align-items: center; }
.info-i {
  width: 30px;
  height: 30px;
  margin-left: 15px;
  border-radius: 50%;
  background: #ccc;
  color: #fff;
  font-size: 22px;
  line-height: 30px;
  font-weight: 700;
  text-align: center;
}
.toggle {
  margin: 7px 0 9px;
  height: 71px;
  padding: 6px;
  box-sizing: border-box;
  background: #f7f7f9;
  border-radius: 8px;
  display: grid;
  grid-template-columns: 163px 1fr;
  font-size: 32px;
  color: #666;
}
.toggle span { display: flex; align-items: center; justify-content: center; white-space: nowrap; }
.toggle .on { background: #fff; border-radius: 6px; color: #222; font-weight: 500; }

.banner {
  margin: 22px 18px 0;
  height: 90px;
  flex-shrink: 0;
  border-radius: 45px;
  background: #fcede5;
  display: flex;
  align-items: center;
  padding-left: 30px;
  box-sizing: border-box;
}
.horn { flex-shrink: 0; }
.banner-t { margin-left: 56px; width: 824px; font-size: 39px; color: #de5a12; white-space: nowrap; flex-shrink: 0; }
.banner-sep { width: 1px; height: 36px; background: #d98a5c; margin: 0 16px 0 0; flex-shrink: 0; }

.ctabs {
  margin-top: 16px;
  height: 106px;
  flex-shrink: 0;
  box-sizing: border-box;
  border-top: 2px solid #ddd;
  border-bottom: 2px solid #ddd;
  display: flex;
  justify-content: space-between;
  padding: 0 57px 0 60px;
}
.ctab { position: relative; font-size: 44px; line-height: 100px; color: #666; white-space: nowrap; }
.ctab.on { color: #dc5b14; }
.ctab.on::after {
  content: "";
  position: absolute;
  left: 35px;
  bottom: 6px;
  width: 60px;
  height: 6px;
  border-radius: 3px;
  background: #dc5b14;
}

.scroll { flex: 1; overflow: hidden; padding-top: 37px; box-sizing: border-box; min-height: 0; }
.cards { display: flex; gap: 25px; padding-left: 36px; }
.card {
  flex: 0 0 479px;
  height: 156px;
  box-sizing: border-box;
  background: #fdf0f0;
  border-radius: 20px;
  display: flex;
  align-items: center;
  padding-left: 36px;
}
.card-ico { flex-shrink: 0; margin-right: 31px; }
.card-t { font-size: 38px; line-height: 50px; font-weight: 700; color: #333; letter-spacing: 1px; margin-top: 4px; }
.card-s { margin-top: 4px; font-size: 32px; line-height: 44px; color: #666; white-space: nowrap; }
.indicator { margin: 14px 0 0 500px; width: 79px; height: 7px; border-radius: 4px; background: #d9dce0; overflow: hidden; }
.indicator i { display: block; width: 57px; height: 7px; background: #e9610f; border-radius: 4px; }
.chips { display: flex; gap: 25px; padding-left: 36px; margin-top: 15px; }
.chip {
  flex-shrink: 0;
  display: flex;
  box-sizing: border-box;
  height: 90px;
  padding: 25px 0 0 42px;
  background: #f7f7f9;
  border-radius: 12px;
  font-size: 38px;
  line-height: 48px;
  color: #666;
  white-space: nowrap;
}
.c1 { width: 357px; }
.c2 { width: 155px; }
.c3 { width: 315px; padding-left: 37px; }
.c4 { width: 300px; }
.chev { margin: 12px 0 0 10px; }

.bottom {
  height: 136px;
  flex-shrink: 0;
  box-sizing: border-box;
  border-top: 2px solid #d5d8dd;
  background: #f7f8fa;
  display: flex;
}
.index { width: 276px; position: relative; text-align: center; }
.index-tri {
  position: absolute;
  left: 127px;
  top: 8px;
  border-left: 11px solid transparent;
  border-right: 11px solid transparent;
  border-bottom: 10px solid #888;
}
.index-v { margin-top: 27px; font-size: 36px; line-height: 44px; color: #0b9c0b; }
.index-r {
  display: flex;
  margin-top: 2px;
  padding-left: 42px;
  font-size: 36px;
  line-height: 48px;
  color: #666;
  white-space: nowrap;
}
.index-r span { width: 116px; text-align: left; font-size: 35px; }
.index-r b { font-weight: 400; color: #0b9c0b; font-size: 38px; }
.tool { width: 200px; display: flex; flex-direction: column; align-items: center; padding-top: 11px; box-sizing: border-box; }
.tool:nth-child(4) { width: 204px; }
.tool:nth-child(5) { width: 200px; }
.tool svg { height: 62px; flex-shrink: 0; }
.tool-t { margin-top: 12px; font-size: 34px; line-height: 46px; color: #666; }
.tool-t.buy { font-weight: 900; font-size: 36px; background: linear-gradient(90deg, #e23a28, #f4834a); -webkit-background-clip: text; background-clip: text; color: transparent; }
.tool-t.add { color: #dc5b14; }

.gesture { height: 48px; flex-shrink: 0; background: #000; display: flex; justify-content: center; padding-top: 18px; box-sizing: border-box; }
.gesture i { width: 360px; height: 9px; border-radius: 5px; background: #888; }
</style>

<style>
html, body { margin: 0; padding: 0; background: #fff; }
</style>
